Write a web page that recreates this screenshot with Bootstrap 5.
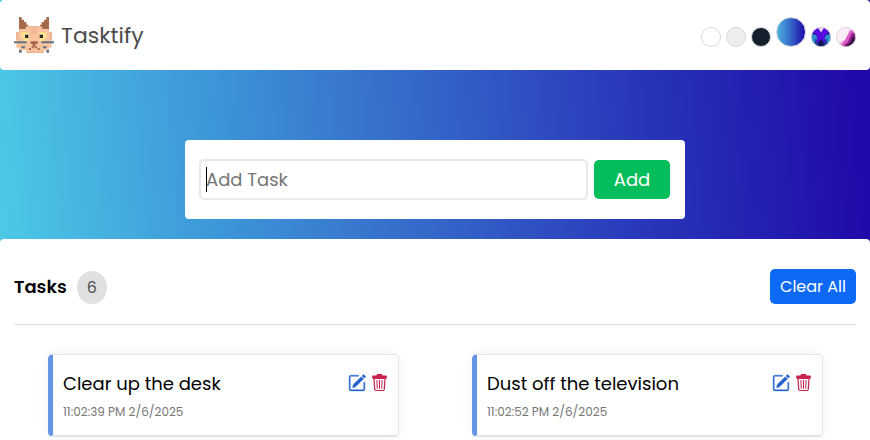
<!DOCTYPE html>
<html lang="en">
<head>
<meta charset="utf-8">
<meta name="viewport" content="width=device-width, initial-scale=1">
<title>Tasktify</title>
<link href="https://cdn.jsdelivr.net/npm/bootstrap@5.3.0/dist/css/bootstrap.min.css" rel="stylesheet">
<style>
body{font-family:Poppins,Inter,"Open Sans",sans-serif;font-feature-settings:"cv11";color:#000;height:440px;overflow:hidden;background:linear-gradient(85deg,#4ecde8 0%,#3f9fda 22%,#3566c9 50%,#2733b8 75%,#1f06a8 100%)}
.topbar{height:70px;padding:0 14px;border-radius:4px}
.brand-name{font-size:22px;line-height:33px;color:#4b4b4b;margin-left:7px}
.swatches{gap:5px;padding-bottom:23px}
.swatch{width:20px;height:20px;border:1px solid #d9d9d9;background:#fff}
.swatch.grey{background:#eee}
.swatch.dark{background:#14202b}
.swatch.ocean{width:30px;height:30px;background:linear-gradient(90deg,#4cb3dc,#3566c9 50%,#1f06a8)}
.hero{height:169px;padding-top:70px}
.add-box{width:500px;height:79px;border-radius:4px;padding:0 15px 0 14px}
.add-input{width:389px;height:41px;border:2px solid #e9e9e9;border-radius:5px;padding-left:5px;font-size:18px;color:#757575}
.caret{width:1px;height:25px;background:#000;margin-right:-1px}
.btn-add{width:76px;height:39px;background:#05bd5b;color:#fff;border-radius:5px;font-size:18px;padding:0}
.tasks{height:201px;border-radius:4px 4px 0 0;padding:30px 14px 0}
.tasks-head{height:56px;border-bottom:1px solid #dedede}
.tasks-head h1{font-size:18px;font-weight:600;line-height:35px}
.count{width:30px;height:33px;background:#e0e0e0;color:#555;border-radius:50%;font-size:16px;margin:1px 0 0 10px;padding-top:1px}
.btn-clear{width:86px;height:35px;background:#0d6af7;color:#fff;border-radius:5px;font-size:16px;padding:0}
.task-grid{padding:29px 33px 0 34px;gap:73px}
.task{width:351px;height:83px;border:1px solid #e4e4e4;border-bottom-width:2px;border-left:5px solid #6394e5;border-radius:5px;box-shadow:0 0 14px rgba(0,0,0,.06);padding:15px 11px 0 10px}
.task-name{font-size:18px;line-height:27px;white-space:nowrap}
.task-time{font-size:12px;line-height:18px;color:#777;margin-top:6px;white-space:nowrap}
.tools{gap:6px;padding-top:4px}
</style>
<script src="https://cdn.jsdelivr.net/npm/bootstrap@5.3.0/dist/js/bootstrap.bundle.min.js"></script>
</head>
<body>
<svg width="0" height="0" class="position-absolute" aria-hidden="true">
<symbol id="pencil" viewBox="0 0 16 16"><g stroke-width=".35"><path d="M15.502 1.94a.5.5 0 0 1 0 .706L14.459 3.69l-2-2L13.502.646a.5.5 0 0 1 .707 0l1.293 1.293zm-1.75 2.456-2-2L4.939 9.21a.5.5 0 0 0-.121.196l-.805 2.414a.25.25 0 0 0 .316.316l2.414-.805a.5.5 0 0 0 .196-.12l6.813-6.814z"/><path fill-rule="evenodd" d="M1 13.5A1.5 1.5 0 0 0 2.5 15h11a1.5 1.5 0 0 0 1.5-1.5v-6a.5.5 0 0 0-1 0v6a.5.5 0 0 1-.5.5h-11a.5.5 0 0 1-.5-.5v-11a.5.5 0 0 1 .5-.5H9a.5.5 0 0 0 0-1H2.5A1.5 1.5 0 0 0 1 2.5z"/></g></symbol>
<symbol id="trash" viewBox="0 0 15 17"><path d="M4.500 1.500V1.300A1.300 1.300 0 0 1 5.800 0h3.400a1.300 1.300 0 0 1 1.300 1.300v.2H14a.9.9 0 0 1 .9.900V4.600H.1V2.400A.9.9 0 0 1 1 1.500z"/><path fill-rule="evenodd" d="M1.300 4h12.400l-.8 11.200a1.900 1.900 0 0 1-1.900 1.700H4a1.900 1.900 0 0 1-1.900-1.700zM2.600 5l.7 10a.9.9 0 0 0 .9.900h6.600a.9.9 0 0 0 .9-.9l.7-10z"/><path d="M4.400 6h1l.4 8.700h-1zM7 6h1v8.700H7zM9.600 6h1l-.4 8.700h-1z"/></symbol>
</svg>

<header class="topbar bg-white d-flex align-items-center justify-content-between">
  <div class="d-flex align-items-center">
    <svg width="40" height="36" viewBox="42 51 120 108" aria-label="Cat">
      <path fill="#a4694b" d="M57 51h8v8h7v7h7v8h5v14H57zM147 51h-8v8h-7v7h-7v8h-5v14h27z"/>
      <path fill="#f8c39f" d="M77 80h50v8h20v8h8v47h-8v8h-15v7H79v-7H57v-8h-8V96h8v-8h20z"/>
      <path fill="#e6a783" d="M79 79h46v3H79zM49 96h4v23h-4zM151 96h4v23h-4zM79 155h53v3H79z"/>
      <path fill="#ffe28d" d="M64 97h22v18H64zM118 97h22v18h-22zM72 115h14v8H72zM119 115h14v8h-14z"/>
      <path fill="#f6b692" d="M94 83h16v20H94z"/>
      <path fill="#262d31" d="M75 104h10v10H75zM119 104h10v10h-10z"/>
      <path fill="#a8644a" d="M92 124h21v8h-7v8h-8v-8h-6zM95 139h6v6h-6zM105 139h6v6h-6zM87 144h6v6h-6zM113 144h6v6h-6z"/>
      <path fill="#667385" d="M42 124h38v6H42zM124 124h38v6h-38zM64 139h11v6H64zM129 139h11v6h-11zM57 150h8v8h-8zM139 150h8v8h-8z"/>
    </svg>
    <span class="brand-name">Tasktify</span>
  </div>
  <div class="swatches d-flex align-items-end align-self-end">
    <span class="swatch rounded-circle"></span>
    <span class="swatch grey rounded-circle"></span>
    <span class="swatch dark rounded-circle"></span>
    <span class="swatch ocean rounded-circle"></span>
    <svg width="20" height="20" viewBox="0 0 20 20">
      <clipPath id="disc"><circle cx="10" cy="10" r="9.700"/></clipPath>
      <g clip-path="url(#disc)"><path fill="#241a9c" d="M0 0h20v20H0z"/><path fill="#2a8fcb" d="M0 7l5 1 2 4-3 6H0zM20 7l-5 1-2 4 3 6h4z"/><path fill="#1c3f96" d="M4 12l3 1 0 5-3-1zM16 12l-3 1 0 5 3-1z"/><path fill="#5a0be4" d="M3 1h4l3 6 3-6h4l1 3-5 6 2 4-2 1-3-3-3 3-2-1 2-4-5-6z"/><path fill="#f0dcfb" d="M6.500 0h7L10 5.500z"/><path fill="#0f1450" d="M10 12l4 8H6z"/></g>
      <circle cx="10" cy="10" r="9.600" fill="none" stroke="#d4d4e0" stroke-width=".8"/>
    </svg>
    <svg width="20" height="20" viewBox="0 0 20 20">
      <g clip-path="url(#disc)"><path fill="#fcedf8" d="M0 0h20v20H0z"/><path fill="#f3b8e6" d="M13 3l4-2 3 4-10 15H2l2-5 6-3z"/><path fill="#d95bc6" d="M14 4l4-1-5 12-5 4H4l5-6z"/><path fill="#8b1f83" d="M16 6l4-1v7l-8 8H6l6-5z"/><path fill="#35103f" d="M17 10l3 1-3 9H8l6-4z"/></g>
      <circle cx="10" cy="10" r="9.600" fill="none" stroke="#d9cfd9" stroke-width=".8"/>
    </svg>
  </div>
</header>

<section class="hero d-flex justify-content-center">
  <div class="add-box bg-white d-flex align-items-center justify-content-between">
    <div class="add-input d-flex align-items-center"><span class="caret"></span><span>Add Task</span></div>
    <button class="btn btn-add" type="button">Add</button>
  </div>
</section>

<main class="tasks bg-white">
  <div class="tasks-head d-flex justify-content-between align-items-start">
    <div class="d-flex align-items-center">
      <h1 class="mb-0">Tasks</h1>
      <span class="count d-flex align-items-center justify-content-center">6</span>
    </div>
    <button class="btn btn-clear" type="button">Clear All</button>
  </div>
  <div class="task-grid d-flex">
    <article class="task bg-white d-flex justify-content-between align-items-start">
      <div><div class="task-name"><span>Clear up the desk</span></div><div class="task-time"><span>11:02:39 PM 2/6/2025</span></div></div>
      <div class="tools d-flex"><svg width="18" height="18" fill="#2160cf" stroke="#2160cf"><use href="#pencil"/></svg><svg width="15" height="17" fill="#c92350"><use href="#trash"/></svg></div>
    </article>
    <article class="task bg-white d-flex justify-content-between align-items-start">
      <div><div class="task-name"><span>Dust off the television</span></div><div class="task-time"><span>11:02:52 PM 2/6/2025</span></div></div>
      <div class="tools d-flex"><svg width="18" height="18" fill="#2160cf" stroke="#2160cf"><use href="#pencil"/></svg><svg width="15" height="17" fill="#c92350"><use href="#trash"/></svg></div>
    </article>
  </div>
</main>
</body>
</html>
